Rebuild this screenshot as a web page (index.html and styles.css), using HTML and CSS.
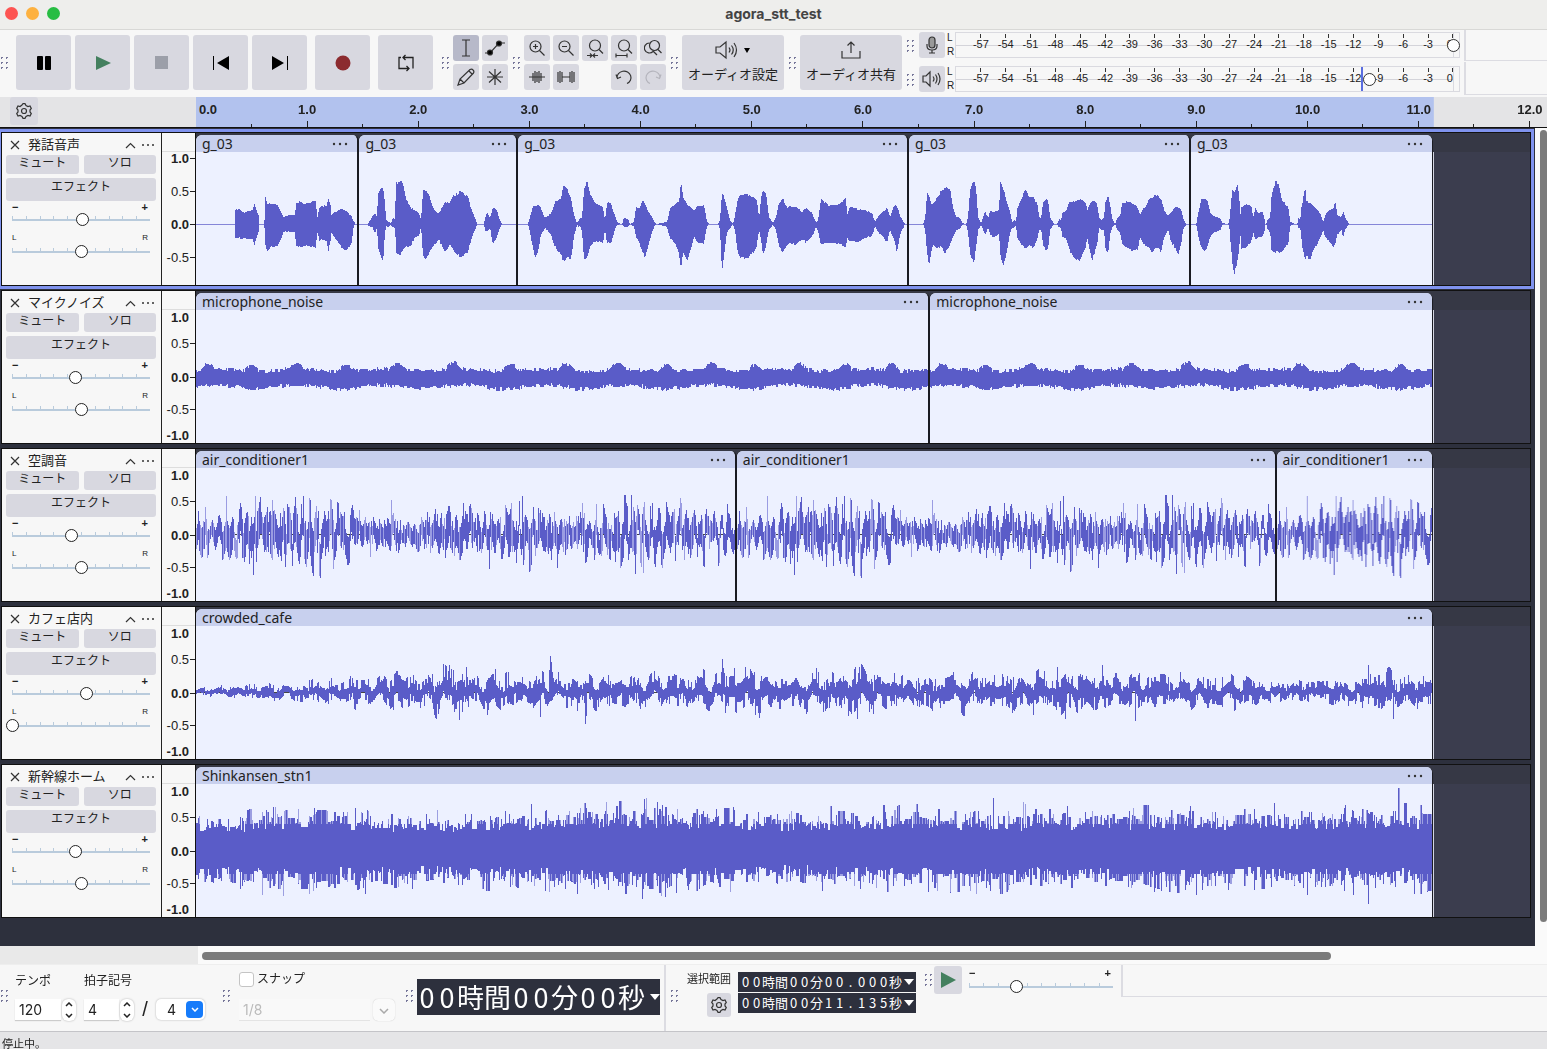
FILE: index.html
```html
<!DOCTYPE html>
<html lang="ja">
<head>
    <meta charset="UTF-8">
    <meta name="viewport" content="width=device-width, initial-scale=1.0">
    <title>agora_stt_test</title>
    <link rel="stylesheet" href="styles.css">
</head>
<body>
    <header class="titlebar">
        <div class="lights">
            <button class="light red" aria-label="閉じる"></button>
            <button class="light yellow" aria-label="最小化"></button>
            <button class="light green" aria-label="最大化"></button>
        </div>
        <h1>agora_stt_test</h1>
    </header>

    <div class="toolbar">
        <div class="group transport">
            <span class="grip"></span>
            <div class="big-buttons">
                <button class="btn big" aria-label="一時停止"><svg width="14" height="14"><rect x="0" y="0" width="6" height="14" rx="1"/><rect x="8" y="0" width="6" height="14" rx="1"/></svg></button>
                <button class="btn big" aria-label="再生"><svg width="16" height="16"><path d="M1 1L16 8L1 15Z" fill="#44805f"/></svg></button>
                <button class="btn big" aria-label="停止"><svg width="14" height="14"><rect width="13" height="13" fill="#9c9fa9"/></svg></button>
                <button class="btn big" aria-label="先頭へ"><svg width="16" height="14"><path d="M0 0H1V14H0ZM16 0V14L4 7Z"/></svg></button>
                <button class="btn big" aria-label="末尾へ"><svg width="16" height="14"><path d="M15 0H16V14H15ZM0 0V14L12 7Z"/></svg></button>
            </div>
            <button class="btn big" aria-label="録音"><svg width="16" height="16"><circle cx="8" cy="8" r="7.5" fill="#8c2b2f"/></svg></button>
            <button class="btn big" aria-label="ループ"><svg width="18" height="18" fill="none" stroke="#222" stroke-width="1.3"><path d="M4 3.500H2V14.500H12M9.500 12L12 14.500L9.500 17M16 14.500V3.500H6M8.500 1L6 3.500L8.500 6"/></svg></button>
        </div>

        <div class="group">
            <span class="grip"></span>
            <div class="tools two">
                <button class="btn small pressed" aria-label="選択ツール"><svg width="18" height="18" class="line"><path d="M5 1H13M9 1V17M5 17H13"/></svg></button>
                <button class="btn small" aria-label="エンベロープツール"><svg width="22" height="18" class="line"><path d="M1 14H6L15 4H21"/><circle cx="6" cy="13.500" r="2.500" fill="#000"/><circle cx="15" cy="4.500" r="2.500" fill="#000"/></svg></button>
                <button class="btn small" aria-label="ドローツール"><svg width="18" height="18" class="line"><path d="M1 17L3 11L13 1.500Q15 0.500 16 2Q17.500 3.500 16.500 5L7 15ZM3 11L7 15M12 3L15 6"/></svg></button>
                <button class="btn small" aria-label="マルチツール"><svg width="18" height="18" class="line"><path d="M9 1V17M1 9H17M3 3.500L15 14.500M15 3.500L3 14.500"/></svg></button>
            </div>
        </div>

        <div class="group">
            <span class="grip"></span>
            <div class="tools five">
                <button class="btn small" aria-label="ズームイン"><svg width="18" height="18" class="line"><circle cx="7.500" cy="7.500" r="5.500"/><path d="M11.500 11.500L16.500 16.500M5 7.500H10M7.500 5V10"/></svg></button>
                <button class="btn small" aria-label="ズームアウト"><svg width="18" height="18" class="line"><circle cx="7.500" cy="7.500" r="5.500"/><path d="M11.500 11.500L16.500 16.500M5 7.500H10"/></svg></button>
                <button class="btn small" aria-label="選択範囲に合わせる"><svg width="18" height="20" class="line"><circle cx="9" cy="7.500" r="5.500"/><path d="M13 11.500L17 15.500M1 17.500H12M4 15.500L6 17.500L4 19.500M9 15.500L7 17.500L9 19.500"/></svg></button>
                <button class="btn small" aria-label="プロジェクトに合わせる"><svg width="18" height="20" class="line"><circle cx="9" cy="7.500" r="5.500"/><path d="M13 11.500L17 15.500M1 17.500H12M1 15.500V19.500M12 15.500V19.500"/></svg></button>
                <button class="btn small" aria-label="ズーム切り替え"><svg width="18" height="18" class="line"><circle cx="10.500" cy="6.500" r="5"/><path d="M5.500 4A5 5 0 1 0 9 12.500M14 10.500L17.500 14M9 12L13 16"/></svg></button>
                <button class="btn small" aria-label="選択範囲外をトリム"><svg width="18" height="16" class="line"><path d="M1 8H17M5 4V12M7 2V14M9 3V13M11 2V14M13 4V12"/></svg></button>
                <button class="btn small" aria-label="選択範囲を無音化"><svg width="18" height="16" class="line"><path d="M1 3V13M3 2V14M5 3V13M5 8H13M13 3V13M15 2V14M17 3V13"/></svg></button>
                <span></span>
                <button class="btn small" aria-label="元に戻す"><svg width="18" height="16" class="line"><path d="M2 9A7 6.500 0 1 1 12 14.500M1 5.500L2.500 9.500L6 8"/></svg></button>
                <button class="btn small" aria-label="やり直し" disabled><svg width="18" height="16" class="line faded"><path d="M16 9A7 6.500 0 1 0 6 14.500M17 5.500L15.500 9.500L12 8"/></svg></button>
            </div>
        </div>

        <div class="group">
            <span class="grip"></span>
            <button class="btn wide">
                <svg width="38" height="20" class="line"><path d="M2 7H6L12 2V18L6 13H2ZM15 7.500Q17 10 15 12.500M17.500 5.500Q21 10 17.500 14.500M20 3Q25 10 20 17"/><path d="M30 8H36L33 13Z" fill="#000" stroke="none"/></svg>
                オーディオ設定
            </button>
        </div>

        <div class="group">
            <span class="grip"></span>
            <button class="btn wide">
                <svg width="22" height="20" class="line"><path d="M2 11V18H20V11M11 13V2M7.500 5.500L11 2L14.500 5.500"/></svg>
                オーディオ共有
            </button>
        </div>

        <div class="meters">
            <div class="meter-row">
                <span class="grip"></span>
                <button class="btn small" aria-label="録音メーター"><svg width="14" height="18" class="line"><rect x="4" y="1" width="6" height="11" rx="3" fill="#999"/><path d="M2 8V10Q2 14 7 14Q12 14 12 10V8M7 14V17M4 17H10"/></svg></button>
                <span class="lr">L<br>R</span>
                <div class="meter" data-knob="100"></div>
                <span class="clip-light"></span>
            </div>
            <div class="meter-row">
                <span class="grip"></span>
                <button class="btn small" aria-label="再生メーター"><svg width="20" height="18" class="line"><path d="M1 6H4L8 2V16L4 12H1ZM11 6.500Q13 9 11 11.500M13.500 4.500Q16.500 9 13.500 13.500M16 3Q20 9 16 15"/></svg></button>
                <span class="lr">L<br>R</span>
                <div class="meter" data-knob="83" data-level="81.500"></div>
                <span class="clip-light"></span>
            </div>
        </div>
        <div class="dock">
            <span></span>
            <span></span>
        </div>
    </div>

    <div class="timeline">
        <button class="btn gear" aria-label="タイムライン設定"><svg width="16" height="16" class="line"><path d="M6 2L7 0.700H9L10 2.500L12 3.500L14 3L15.300 5.500L14 7V9L15.300 10.500L14 13L12 12.500L10 13.500L9 15.300H7L6 13.500L4 12.500L2 13L0.700 10.500L2 9V7L0.700 5.500L2 3L4 3.500Z"/><circle cx="8" cy="8" r="2.500"/></svg></button>
        <div class="ruler" id="ruler"></div>
    </div>

    <div class="workspace">
        <main class="tracks" id="tracks"></main>
        <div class="vscroll"><div class="thumb"></div></div>
    </div>
    <div class="hscroll"><div class="thumb"></div></div>

    <footer class="bottom">
        <span class="grip"></span>
        <div class="field">
            <label for="tempo">テンポ</label>
            <div class="spin">
                <input type="text" id="tempo" value="120">
                <div class="stepper"><button aria-label="上げる"><svg width="8" height="5"><path d="M1 4L4 1L7 4"/></svg></button><button aria-label="下げる"><svg width="8" height="5"><path d="M1 1L4 4L7 1"/></svg></button></div>
            </div>
        </div>
        <div class="field signature">
            <label for="beats">拍子記号</label>
            <div class="spin">
                <input type="text" id="beats" class="narrow" value="4">
                <div class="stepper"><button aria-label="上げる"><svg width="8" height="5"><path d="M1 4L4 1L7 4"/></svg></button><button aria-label="下げる"><svg width="8" height="5"><path d="M1 1L4 4L7 1"/></svg></button></div>
                <span class="slash">/</span>
                <div class="select">
                    <select aria-label="音価"><option>2</option><option selected>4</option><option>8</option></select>
                    <span class="arrow"><svg width="8" height="5"><path d="M1 1L4 4L7 1"/></svg></span>
                </div>
            </div>
        </div>
        <span class="grip"></span>
        <div class="snap">
            <label><input type="checkbox">スナップ</label>
            <div class="combo">
                <input type="text" value="1/8" aria-label="スナップ単位" disabled>
                <button aria-label="開く" disabled><svg width="10" height="6"><path d="M1 1L5 5L9 1"/></svg></button>
            </div>
        </div>
        <span class="grip"></span>
        <div class="time large" data-time="00時間00分00秒"></div>
        <div class="selection">
            <span class="grip"></span>
            <div class="selection-side">
                <span>選択範囲</span>
                <button class="btn cog" aria-label="選択設定"><svg width="16" height="16" class="line"><path d="M6 2L7 0.700H9L10 2.500L12 3.500L14 3L15.300 5.500L14 7V9L15.300 10.500L14 13L12 12.500L10 13.500L9 15.300H7L6 13.500L4 12.500L2 13L0.700 10.500L2 9V7L0.700 5.500L2 3L4 3.500Z"/><circle cx="8" cy="8" r="2.500"/></svg></button>
            </div>
            <div class="selection-times">
                <div class="time" data-time="00時間00分00.000秒"></div>
                <div class="time" data-time="00時間00分11.135秒"></div>
            </div>
        </div>
        <div class="speed">
            <span class="grip"></span>
            <button class="btn play" aria-label="指定速度で再生"><svg width="16" height="16"><path d="M1 0L16 8L1 16Z" fill="#44805f"/></svg></button>
            <div class="slider">
                <div class="ends"><span>−</span><span>+</span></div>
                <input type="range" value="33" aria-label="再生速度">
            </div>
        </div>
        <div class="rest"></div>
    </footer>
    <div class="status">停止中。</div>

    <script src="script.js"></script>
</body>
</html>
```
FILE: styles.css
```css
:root {
    --side: 196px;
    --second: calc((100vw - 213px) / 12);
    --dark: #2d303d;
    --button: #d8d8e0;
}

* {
    margin: 0;
    padding: 0;
    box-sizing: border-box;
}

body {
    height: 100vh;
    display: flex;
    flex-direction: column;
    overflow: hidden;
    background: #f7f7f7;
    color: #222;
    font-family: "Liberation Sans", "Noto Sans CJK JP", sans-serif;
    font-size: 12px;
}

button,
input,
select {
    font: inherit;
    color: inherit;
    border: none;
}

.line {
    fill: none;
    stroke: #333;
    stroke-width: 1.2;
}

.faded {
    stroke: #b4b4bc;
}

/* Title bar */
.titlebar {
    height: 30px;
    flex: none;
    display: grid;
    grid-template-columns: 1fr auto 1fr;
    align-items: center;
    padding-bottom: 2px;
    background: #eeeeec;
    border-bottom: 1px solid #d8d8d6;
}

.titlebar h1 {
    font-family: Inter, sans-serif;
    font-size: 14px;
    font-weight: 700;
    line-height: 18px;
    color: #444;
}

.lights {
    display: flex;
    gap: 8px;
    padding-left: 5px;
}

.light {
    width: 13px;
    height: 13px;
    border-radius: 50%;
}

.red {
    background: #fd5452;
}

.yellow {
    background: #fdb13f;
}

.green {
    background: #27bd43;
}

/* Toolbar */
.toolbar {
    height: 67px;
    flex: none;
    display: flex;
    gap: 4px;
}

.group {
    display: flex;
    align-items: center;
    gap: 4px;
    padding-bottom: 2px;
}

.transport {
    gap: 8px;
    padding-right: 4px;
}

.big-buttons {
    display: flex;
    gap: 4px;
}

.grip {
    width: 8px;
    height: 15px;
    flex: none;
    background: radial-gradient(circle, #77779a 1px, transparent 1px) -1px 0 / 5px 5px;
}

.btn {
    display: flex;
    align-items: center;
    justify-content: center;
    flex: none;
    background: var(--button);
    border-radius: 3px;
}

.big {
    width: 55px;
    height: 55px;
}

.small {
    width: 26px;
    height: 26px;
}

.pressed {
    background: #b7b9c9;
}

.tools {
    display: grid;
    gap: 3px;
}

.two {
    grid-template-columns: repeat(2, 26px);
}

.five {
    grid-template-columns: repeat(5, 26px);
}

.wide {
    width: 102px;
    height: 55px;
    flex-direction: column;
    gap: 4px;
    font-size: 13px;
    line-height: 22px;
    white-space: nowrap;
}

.meters {
    flex: 1;
    display: flex;
    flex-direction: column;
    gap: 8px;
    padding-top: 2px;
}

.meter-row {
    height: 26px;
    display: flex;
    align-items: center;
}

.meter-row .btn {
    margin: 0 2px 0 5px;
}

.lr {
    width: 8px;
    flex: none;
    font-size: 10px;
    line-height: 14px;
}

.meter {
    position: relative;
    flex: 1;
    display: flex;
    height: 26px;
    padding-left: calc((100% - 56px) / 40);
    border: 1px solid #dadae0;
    background: linear-gradient(#d4d4da, #d4d4da) 0 12px / 100% 1px no-repeat;
    font-size: 11px;
    line-height: 14px;
}

.meter span {
    flex: 2 0 0;
    min-width: 0;
    text-align: center;
    padding-top: 4px;
    background: linear-gradient(#333, #333) 50% 1px / 1px 4px no-repeat;
}

.meter span.zero {
    flex-grow: 1;
    text-align: right;
    background-position: 100% 1px;
}

.meter .level {
    position: absolute;
    top: 0;
    width: 2px;
    height: 24px;
    background: #5b6ee0;
}

.meter .knob {
    position: absolute;
    top: 6px;
    width: 13px;
    height: 13px;
    margin-left: -6px;
    border: 1px solid #333;
    border-radius: 50%;
    background: #fff;
}

.clip-light {
    width: 6px;
    flex: none;
    height: 26px;
    border: 1px solid #dadae0;
    border-left: none;
}

.dock {
    width: 83px;
    display: grid;
    grid-template-rows: 31px 33px;
    row-gap: 1px;
}

.dock span {
    border: 1px solid #dcdce2;
    border-width: 0 0 1px 2px;
}

/* Timeline */
.timeline {
    height: 31px;
    flex: none;
    display: flex;
    background: #e4e4e6;
    border-bottom: 1px solid #111;
}

.gear {
    width: 28px;
    height: 28px;
    margin-left: 10px;
    margin-right: 158px;
}

.ruler {
    flex: 1;
    display: flex;
    overflow: hidden;
    background: linear-gradient(#b2c2ee, #b2c2ee) 0 0 / calc(var(--second) * 11.135) 100% no-repeat;
    font-size: 13px;
    font-weight: bold;
}

.ruler span {
    position: relative;
    width: var(--second);
    flex: none;
    padding-top: 5px;
    text-align: center;
    background:
        linear-gradient(#222, #222) 50% 100% / 1px 6px no-repeat,
        linear-gradient(#222, #222) 100% 100% / 1px 3px no-repeat;
}

.ruler span:first-child {
    width: calc(var(--second) / 2);
    padding-left: 3px;
    text-align: left;
    background: linear-gradient(#222, #222) 100% 100% / 1px 3px no-repeat;
}

/* Tracks */
.workspace {
    flex: 1;
    min-height: 0;
    display: flex;
}

.tracks {
    flex: 1;
    display: flex;
    flex-direction: column;
    gap: 4px;
    padding: 4px 4px 0 1px;
    background: var(--dark);
}

.track {
    height: 154px;
    display: flex;
    border: 1px solid #111;
    background: #f7f7f7;
}

.track.selected {
    box-shadow: 0 0 0 3px #8093ee;
}

.panel {
    width: 160px;
    flex: none;
    padding: 2px 5px 0 4px;
    border-right: 1px solid #222;
}

.name-row {
    display: flex;
    align-items: center;
    height: 20px;
    padding: 0 1px 0 4px;
}

.name-row button {
    display: flex;
    background: none;
}

.name-row h2 {
    flex: 1;
    margin-left: 8px;
    font-size: 13px;
    font-weight: normal;
    line-height: 20px;
}

.name-row .menu {
    margin-left: 5px;
}

.pair {
    display: flex;
    gap: 5px;
}

.pair .btn {
    flex: 1;
}

.panel .btn {
    height: 19px;
    padding-bottom: 4px;
    font-size: 12px;
    line-height: 14px;
}

.panel .effect {
    width: 100%;
    height: 23px;
    margin-top: 4px;
    padding-bottom: 5px;
}

.slider {
    display: flex;
    flex-direction: column;
}

.ends {
    display: flex;
    justify-content: space-between;
    padding: 0 8px 0 6px;
    font-size: 11px;
    font-weight: bold;
    line-height: 11px;
}

.panel .slider {
    height: 32px;
}

.panel .ends {
    height: 11px;
    line-height: 13px;
}

.panel .pan .ends {
    font-size: 8px;
    line-height: 10px;
    font-weight: normal;
}

.slider input {
    appearance: none;
    width: 100%;
    height: 14px;
    background:
        linear-gradient(#b9cbdc, #b9cbdc) 50% 7px / calc(100% - 12px) 2px no-repeat,
        repeating-linear-gradient(90deg, #b9cbdc 0 1px, transparent 1px 10%) 50% 4px / calc(100% - 12px) 3px no-repeat;
}

.slider input::-webkit-slider-thumb {
    appearance: none;
    width: 13px;
    height: 13px;
    border: 1px solid #222;
    border-radius: 50%;
    background: #fff;
}

.scale {
    width: 33px;
    flex: none;
    display: grid;
    grid-template-rows: 26px 26px 42px 22px 30px;
    align-items: center;
    align-content: start;
    padding-top: 13px;
    background: linear-gradient(#ddd, #ddd) 0 18px / 100% 1px no-repeat;
    font-size: 13px;
    text-align: right;
    overflow: hidden;
}

.scale span {
    padding-right: 6px;
    background: linear-gradient(#222, #222) 100% 50% / 5px 1px no-repeat;
}

.scale .strong {
    font-weight: bold;
}

.scale .edge {
    background: none;
}

.selected .scale {
    grid-template-rows: 33px;
    grid-auto-rows: 33px;
    padding-top: 9px;
}

.selected .scale .edge {
    background: linear-gradient(#222, #222) 100% 50% / 5px 1px no-repeat;
}

.lane {
    flex: 1;
    display: flex;
    padding-top: 2px;
    border-left: 1px solid #111;
    background: linear-gradient(#363845 19px, #3b3d4e 19px);
}

.clip {
    flex: none;
    display: flex;
    flex-direction: column;
    overflow: hidden;
    border-right: 2px solid #1a1b22;
    border-radius: 6px 6px 0 0;
    background: #edf1ff;
}

.clip:nth-last-child(2) {
    border-right-width: 1px;
}

.clip header {
    height: 17px;
    flex: none;
    display: flex;
    justify-content: space-between;
    align-items: center;
    padding: 0 9px 0 6px;
    background: #c8d0ee;
    font-family: "Noto Sans", sans-serif;
    font-size: 14px;
    line-height: 17px;
}

.clip header button {
    display: flex;
    background: none;
}

.clip canvas {
    width: 100%;
    height: 133px;
    display: block;
}

.tail {
    width: 1px;
    margin-top: 17px;
    background: #d4d6e2;
}

/* Scrollbars */
.vscroll {
    width: 12px;
    padding: 2px 0 0 5px;
    background: #fafafa;
}

.vscroll .thumb {
    height: 97%;
    border-radius: 4px;
    background: #7b7b7b;
}

.hscroll {
    height: 18px;
    flex: none;
    padding: 6px 216px 0 202px;
    background: linear-gradient(90deg, #e9e9e9 198px, #fafafa 198px);
}

.hscroll .thumb {
    height: 8px;
    border-radius: 4px;
    background: #7b7b7b;
}

/* Bottom bar */
.bottom {
    height: 67px;
    flex: none;
    display: flex;
    align-items: flex-start;
    border-top: 1px solid #eee;
}

.bottom .grip {
    margin-top: 23px;
}

.field {
    margin-left: 7px;
    padding-top: 8px;
}

.field label {
    display: block;
    height: 26px;
    line-height: 16px;
}

.signature {
    margin-left: 8px;
    margin-right: 17px;
}

.spin {
    display: flex;
    align-items: center;
    height: 21px;
}

.spin input {
    width: 46px;
    height: 21px;
    padding-left: 4px;
    background: #fff;
    box-shadow: 0 1px 1px #ccc;
    font-family: Inter, sans-serif;
    font-size: 14px;
}

.spin input.narrow {
    width: 35px;
}

.stepper {
    width: 14px;
    height: 22px;
    display: flex;
    flex-direction: column;
    margin-left: 1px;
    border-radius: 6px;
    background: #fff;
    box-shadow: 0 0 2px #aaa;
}

.stepper button {
    flex: 1;
    display: flex;
    align-items: center;
    justify-content: center;
    background: none;
}

.stepper svg,
.arrow svg,
.combo svg {
    fill: none;
    stroke: #222;
    stroke-width: 1.5;
}

.slash {
    width: 22px;
    text-align: center;
    font-size: 20px;
}

.select {
    position: relative;
}

.select select {
    appearance: none;
    width: 49px;
    height: 21px;
    padding-left: 11px;
    border-radius: 5px;
    background: #fff;
    box-shadow: 0 0 2px #aaa;
    font-family: Inter, sans-serif;
    font-size: 14px;
}

.arrow {
    position: absolute;
    top: 2px;
    right: 2px;
    width: 17px;
    height: 17px;
    display: flex;
    align-items: center;
    justify-content: center;
    border-radius: 4px;
    background: #167bfa;
    pointer-events: none;
}

.arrow svg {
    stroke: #fff;
}

.snap {
    margin: 0 10px 0 9px;
    padding-top: 4px;
}

.snap label {
    display: flex;
    align-items: center;
    gap: 3px;
    height: 16px;
    margin-bottom: 14px;
}

.snap input[type="checkbox"] {
    appearance: none;
    width: 15px;
    height: 15px;
    margin-top: 4px;
    border: 1px solid #c4c4c4;
    border-radius: 3px;
    background: #fff;
}

.combo {
    display: flex;
    gap: 3px;
}

.combo input {
    width: 131px;
    height: 22px;
    padding-left: 4px;
    background: #f9f9f9;
    border-bottom: 1px solid #e4e4e4;
    color: #bbb;
    font-family: Inter, sans-serif;
    font-size: 14px;
}

.combo button {
    width: 22px;
    height: 22px;
    border-radius: 5px;
    background: #fafafa;
    box-shadow: 0 0 1px #bbb;
}

.combo svg {
    stroke: #aaa;
}

.time {
    display: flex;
    align-items: center;
    width: 178px;
    height: 20px;
    padding: 0 2px;
    background: var(--dark);
    color: #fff;
    font-family: "Noto Sans CJK JP", sans-serif;
    font-size: 13px;
    line-height: 20px;
}

.time .digit {
    width: 11px;
    text-align: center;
}

.time button {
    margin-left: auto;
    display: flex;
    background: none;
}

.time.large {
    width: 243px;
    height: 36px;
    margin: 14px 4px 0 4px;
    padding: 0;
    font-size: 27px;
    line-height: 36px;
}

.time.large .digit {
    width: 20px;
}

.selection {
    display: flex;
    height: 66px;
    padding-left: 4px;
    border-left: 2px solid #dcdce2;
}

.selection-side {
    width: 53px;
    display: flex;
    flex-direction: column;
    align-items: flex-end;
    padding-top: 5px;
    line-height: 18px;
    font-size: 11px;
    white-space: nowrap;
}

.cog {
    width: 24px;
    height: 24px;
    margin-top: 5px;
}

.selection-times {
    display: flex;
    flex-direction: column;
    gap: 1px;
    margin: 7px 8px 0 7px;
}

.speed {
    display: flex;
    height: 32px;
    margin-right: 2px;
}

.speed .grip {
    margin-top: 7px;
}

.play {
    width: 28px;
    height: 28px;
    margin: 1px 1px 0 2px;
}

.speed .slider {
    width: 156px;
    padding-top: 3px;
}

.rest {
    flex: 1;
    height: 32px;
    border: 1px solid #dcdce2;
    border-width: 0 0 1px 2px;
}

.status {
    height: 18px;
    flex: none;
    padding: 4px 0 0 2px;
    border-top: 1px solid #c4c4c8;
    background: #e5e5e7;
    font-size: 11px;
    line-height: 16px;
}
```
FILE: script.js
```js
const TOTAL = 12;
const PX_PER_SECOND = 111.2;

// Speech envelope: x, height above zero, height below zero
const SPEECH = `39 0 0,40 14 14,43 15 14,46 14 15,49 11 14,52 14 15,57 14 15,59 21 21,61 14 14,63 9 8,64 0 0,68 0 0,69 4 4,70 27 22,72 20 27,76 21 23,82 20 22,86 12 14,88 7 8,94 9 8,99 9 8,101 21 22,104 23 23,110 20 23,120 23 23,122 7 9,124 17 16,131 19 17,133 25 27,135 19 18,136 9 9,139 12 13,146 15 24,151 13 27,156 8 20,158 3 4,160 0 0,
172 0 0,174 2 2,177 7 3,180 11 9,182 7 3,183 31 23,186 37 33,188 36 38,190 21 9,191 4 3,196 1 1,198 6 4,200 5 3,201 42 28,205 44 32,208 42 26,211 26 23,216 16 22,220 14 13,224 11 13,226 4 3,228 34 31,231 35 38,235 27 28,239 14 21,244 11 16,250 22 28,255 22 21,259 29 28,265 33 33,273 28 29,276 16 16,281 4 3,282 0 0,289 0 0,290 6 6,292 12 8,295 6 4,298 17 21,302 14 13,304 6 6,307 0 0,
333 0 0,335 7 9,338 19 24,340 18 34,343 20 28,346 16 11,350 6 4,356 11 11,360 22 23,366 26 31,368 39 38,372 35 33,376 26 35,379 9 13,382 1 1,385 6 3,387 7 6,389 34 36,392 46 34,395 32 23,399 23 18,404 19 18,408 17 19,410 4 6,412 22 19,416 21 19,419 11 9,422 2 1,427 0 0,429 6 3,433 5 3,435 0 0,439 2 3,441 17 13,445 17 21,448 24 29,450 20 37,454 12 18,459 3 3,461 0 0,472 2 3,475 16 14,480 20 19,484 22 29,486 45 47,488 29 28,492 21 38,496 17 26,499 14 13,503 19 19,509 19 19,512 2 3,514 0 0,523 0 0,525 4 6,527 33 51,530 24 24,532 16 9,535 4 4,538 0 0,540 9 6,543 27 31,546 30 35,553 30 34,559 27 28,562 24 21,564 6 6,566 26 16,568 33 33,571 31 21,574 7 6,578 1 1,581 7 6,584 22 23,588 26 28,592 17 21,601 18 20,607 12 16,611 16 19,617 11 13,621 2 3,623 4 6,626 26 21,633 19 19,643 20 19,651 26 24,652 9 13,655 17 18,663 15 18,670 14 14,677 11 12,680 2 3,684 9 9,688 12 13,692 17 19,695 7 6,699 18 16,702 19 29,705 8 11,710 0 0,
728 0 0,730 6 6,732 33 29,734 29 43,736 20 29,738 21 21,742 27 24,746 34 23,750 37 30,755 35 21,758 17 13,761 7 6,765 6 5,767 1 1,771 0 0,773 8 9,775 37 31,779 44 39,781 37 23,783 7 6,786 1 1,788 7 6,790 13 11,793 6 4,795 13 11,799 13 13,804 14 10,805 44 29,808 37 44,811 24 33,815 12 9,817 2 3,819 4 4,821 2 2,822 16 13,826 24 21,830 36 24,834 27 22,838 27 24,842 21 16,844 7 6,846 6 6,848 22 21,851 26 27,853 24 24,855 7 6,859 0 0,862 0 0,864 5 4,866 4 3,867 11 13,871 14 14,875 23 28,880 24 36,885 26 38,891 21 23,892 13 13,894 19 24,897 25 36,902 20 21,904 6 4,906 4 6,909 7 6,910 22 24,913 29 31,915 19 11,917 6 4,920 0 0,922 6 6,925 9 9,927 21 21,931 23 24,938 21 27,943 16 25,945 9 13,947 14 18,950 17 23,954 26 24,957 26 29,960 30 24,964 27 24,966 26 29,969 14 13,973 8 6,976 12 18,979 16 23,983 17 32,986 15 21,988 6 6,991 0 0,
1001 0 0,1003 11 13,1006 25 23,1009 26 28,1012 24 23,1015 12 13,1018 8 9,1025 6 6,1027 1 1,1032 0 0,1034 2 2,1035 14 16,1037 34 39,1039 32 52,1042 41 39,1044 27 23,1045 7 9,1046 17 24,1051 20 24,1056 18 18,1058 7 9,1060 17 15,1063 11 13,1067 13 13,1069 7 9,1070 0 0,1071 0 0,1072 4 4,1075 7 9,1076 26 26,1078 35 29,1081 45 28,1084 37 29,1086 26 29,1093 17 19,1095 2 2,1100 0 0,1102 0 0,1103 6 4,1105 4 4,1106 16 13,1108 26 29,1110 37 38,1111 24 33,1115 21 35,1120 16 24,1125 11 14,1128 2 6,1130 9 13,1134 14 18,1138 16 23,1140 24 21,1142 9 11,1146 7 6,1148 13 13,1150 6 6,1154 0 0`
    .split(",").map(p => p.trim().split(" ").map(Number));

const CAFE = [[0, 3], [25, 6], [80, 8], [130, 10], [160, 15], [200, 16], [260, 20], [330, 15], [400, 14], [500, 16], [540, 20], [600, 16], [660, 21], [700, 15], [790, 16], [860, 18], [940, 16], [1000, 13], [1040, 16], [1080, 10], [1150, 11], [1180, 17], [1240, 14]];
const AIR = [[0, 22], [20, 20], [60, 30], [120, 32], [150, 25], [170, 18], [220, 18], [250, 23], [300, 27], [330, 30], [350, 22], [380, 22], [430, 33], [450, 30], [480, 26], [540, 20]];
const TRAIN = [[0, 36], [30, 33], [70, 40], [120, 42], [200, 35], [260, 33], [330, 38], [450, 43], [520, 38], [600, 33], [680, 36], [720, 40], [850, 38], [1000, 39], [1120, 38], [1160, 42], [1240, 38]];

const CAFE_PEAKS = { 257: -22, 263: 28, 270: -25, 291: 23, 344: 25, 353: -22, 354: -36, 355: -30, 356: -20, 389: 32, 390: 24, 525: -20, 526: -33, 527: -24, 661: 27, 663: -25, 861: -25, 869: 27, 906: -27, 939: 29, 1172: -27, 1197: 27 };
const AIR_PEAKS = { 30: -38, 57: 41, 59: -38, 76: -34, 114: -34, 137: 35, 195: -34, 293: 35, 326: -38, 361: 34, 429: -39, 435: -39, 439: 40, 447: 39, 531: -30 };
const TRAIN_PEAKS = { 77: -43, 87: 46, 335: -46, 410: -48, 450: -52, 461: -48, 469: 47, 537: -43, 797: -52, 829: -46, 1000: 45, 1078: -47, 1111: 45, 1172: 54, 1202: -62, 1203: -62 };

const tracks = [
    { name: "発話音声", gain: 51, pan: 50, selected: true, zero: 72, kind: "speech", clip: "g_03", cuts: [0, 1.47, 2.9, 6.415, 8.95, 11.13] },
    { name: "マイクノイズ", gain: 46, pan: 50, zero: 68, kind: "hiss", clip: "microphone_noise", cuts: [0, 6.605, 11.13] },
    { name: "空調音", gain: 43, pan: 50, zero: 66, kind: "air", clip: "air_conditioner1", cuts: [0, 4.865, 9.72, 11.13] },
    { name: "カフェ店内", gain: 54, pan: 0, zero: 66, kind: "cafe", clip: "crowded_cafe", cuts: [0, 11.13] },
    { name: "新幹線ホーム", gain: 46, pan: 50, zero: 66, kind: "train", clip: "Shinkansen_stn1", cuts: [0, 11.13] }
];

const DOTS = '<svg width="16" height="4" fill="#333"><circle cx="2" cy="2" r="1.200"/><circle cx="8" cy="2" r="1.200"/><circle cx="14" cy="2" r="1.200"/></svg>';
const SMALL_DOTS = '<svg width="14" height="4" fill="#333"><circle cx="2" cy="2" r="1"/><circle cx="7" cy="2" r="1"/><circle cx="12" cy="2" r="1"/></svg>';

function trackHtml(track) {
    const labels = track.selected ? ["1.0", "0.5", "0.0", "-0.5"] : ["1.0", "0.5", "0.0", "-0.5", "-1.0"];
    const scale = labels.map(l => {
        const edge = l.endsWith("1.0");
        return `<span class="${edge ? "strong edge" : l === "0.0" ? "strong" : ""}">${l}</span>`;
    }).join("");
    const clips = track.cuts.slice(1).map((end, i) => `
        <article class="clip" style="width: ${(end - track.cuts[i]) / TOTAL * 100}%">
            <header><span>${track.clip}</span><button aria-label="クリップメニュー">${DOTS}</button></header>
            <canvas data-start="${track.cuts[i]}"></canvas>
        </article>`).join("");

    return `
        <div class="panel">
            <div class="name-row">
                <button aria-label="トラックを閉じる"><svg width="10" height="10" class="line"><path d="M1 1L9 9M9 1L1 9"/></svg></button>
                <h2>${track.name}</h2>
                <button aria-label="折りたたむ"><svg width="11" height="7" class="line"><path d="M1 6L5.500 1.500L10 6"/></svg></button>
                <button class="menu" aria-label="トラックメニュー">${SMALL_DOTS}</button>
            </div>
            <div class="pair"><button class="btn">ミュート</button><button class="btn">ソロ</button></div>
            <button class="btn effect">エフェクト</button>
            <div class="slider">
                <div class="ends"><span>−</span><span>+</span></div>
                <input type="range" value="${track.gain}" aria-label="ゲイン">
            </div>
            <div class="slider pan">
                <div class="ends"><span>L</span><span>R</span></div>
                <input type="range" value="${track.pan}" aria-label="パン">
            </div>
        </div>
        <div class="scale">${scale}</div>
        <div class="lane">${clips}<span class="tail"></span></div>`;
}

// Seeded so that every reload gives the same waveform
function random(seed) {
    return () => {
        seed = (seed * 1664525 + 1013904223) % 4294967296;
        return seed / 4294967296;
    };
}

function interpolate(points, x, column) {
    const next = points.findIndex(p => p[0] > x);
    if (next === 0) return points[0][column];
    if (next < 0) return points[points.length - 1][column];
    const a = points[next - 1];
    const b = points[next];
    return a[column] + (b[column] - a[column]) * (x - a[0]) / (b[0] - a[0]);
}

function column(kind, x, laneX, [a, b, c, d]) {
    if (kind === "speech") {
        if (laneX > 1154) return [0, 0];
        const up = interpolate(SPEECH, laneX, 1);
        const down = interpolate(SPEECH, laneX, 2);
        return [up * (0.94 + a * 0.08), down * (0.94 + b * 0.08)];
    }
    if (kind === "hiss") {
        const bump = Math.max(0, Math.sin(x / 7.9 + Math.sin(x / 90) * 1.5) - 0.55) * 14;
        const swell = Math.sin(x / 13) * 2;
        return [6 + a * 4 + bump + swell * 0.5, 7 + b * 4 - swell];
    }
    if (kind === "air") {
        const env = interpolate(AIR, x, 1);
        const swing = Math.sin(x * 0.9) * 0.35 + (c - 0.5) * 1.1;
        return [env * (0.25 + a * 0.6 + swing * 0.7), env * (0.25 + b * 0.6 - swing * 0.7)];
    }
    if (kind === "cafe") {
        const env = interpolate(CAFE, x, 1);
        const drift = Math.sin(x / 3) * Math.sin(x / 17) * 0.35 + (c - 0.5) * 0.4;
        return [env * (0.35 + a * a * 0.8 + drift), env * (0.3 + b * b * 0.75 - drift)];
    }
    const env = interpolate(TRAIN, x, 1);
    return [env * (0.5 + a * 0.38 + c * c * c * 0.4), env * (0.44 + b * 0.42 + d * d * d * 0.36)];
}

function drawWave(canvas, track, seed) {
    const width = canvas.clientWidth;
    const height = canvas.clientHeight;
    const start = Number(canvas.dataset.start) * PX_PER_SECOND;
    const peaks = { air: AIR_PEAKS, cafe: CAFE_PEAKS, train: TRAIN_PEAKS }[track.kind] || {};
    const rnd = random(seed);
    const ctx = canvas.getContext("2d");
    canvas.width = width;
    canvas.height = height;

    // zero line
    ctx.fillStyle = track.kind === "speech" ? "#8586d8" : "#444";
    ctx.fillRect(0, track.zero, width, 1);

    let noise = [0.5, 0.5, 0.5, 0.5];
    for (let x = 0; x < width; x++) {
        // neighbouring columns often share a value
        if (rnd() < 0.6) noise = [rnd(), rnd(), rnd(), rnd()];
        let [up, down] = column(track.kind, x, start + x + 1, noise);
        if (peaks[x] < 0) up = -peaks[x];
        if (peaks[x] > 0) down = peaks[x];
        if (up + down < 1) continue;
        const thin = rnd() < 0.3;
        ctx.fillStyle = thin && track.kind === "air" ? "#9a9ce2" : "#5a5cc8";
        ctx.fillRect(x, Math.round(track.zero - up), 1, Math.round(up + down));
        if (thin && track.kind === "train") {
            ctx.fillStyle = "rgba(237, 241, 255, 0.45)";
            ctx.fillRect(x, Math.round(track.zero - up), 1, Math.max(0, Math.round(up - 26)));
            ctx.fillRect(x, track.zero + 24, 1, Math.max(0, Math.round(down - 24)));
        }
    }
}

tracks.forEach((track, i) => {
    const section = document.createElement("section");
    section.className = track.selected ? "track selected" : "track";
    section.innerHTML = trackHtml(track);
    document.getElementById("tracks").append(section);
    section.querySelectorAll("canvas").forEach(canvas => drawWave(canvas, track, 77 + i * 1013));
});

for (let s = 0; s <= TOTAL; s++) {
    const label = document.createElement("span");
    label.textContent = s.toFixed(1);
    document.getElementById("ruler").append(label);
}

document.querySelectorAll(".meter").forEach(meter => {
    for (let db = -57; db <= 0; db += 3) {
        const mark = document.createElement("span");
        mark.textContent = db;
        if (db === 0) mark.className = "zero";
        meter.append(mark);
    }
    if (meter.dataset.level) {
        meter.insertAdjacentHTML("beforeend", `<i class="level" style="left: ${meter.dataset.level}%"></i>`);
    }
    meter.insertAdjacentHTML("beforeend", `<i class="knob" style="left: ${meter.dataset.knob}%"></i>`);
});

document.querySelectorAll(".time").forEach(time => {
    const cells = [...time.dataset.time].map(ch => /[\d.]/.test(ch) ? `<span class="digit">${ch}</span>` : `<span>${ch}</span>`);
    time.innerHTML = cells.join("") + '<button aria-label="時間の書式"><svg width="10" height="6"><path d="M0 0H10L5 6Z" fill="#fff"/></svg></button>';
});
```
